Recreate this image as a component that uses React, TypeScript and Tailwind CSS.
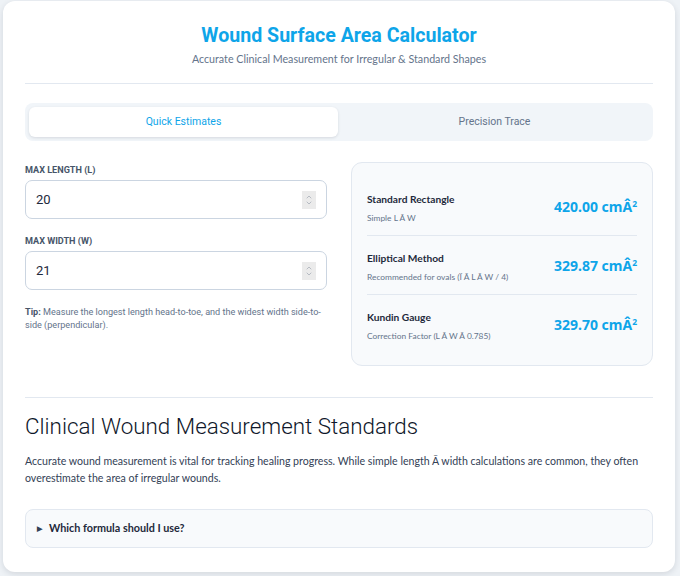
import { ChevronDown, ChevronUp } from 'lucide-react';

const results = [
  { title: 'Standard Rectangle', note: 'Simple L Ã W', value: '420.00' },
  { title: 'Elliptical Method', note: 'Recommended for ovals (Ï Ã L Ã W / 4)', value: '329.87' },
  { title: 'Kundin Gauge', note: 'Correction Factor (L Ã W Ã 0.785)', value: '329.70' },
];

function NumberField({ label, value }: { label: string; value: string }) {
  return (
    <div>
      <label className="mb-[4px] block text-[9.1px] font-bold uppercase leading-[12px] text-[#475569]">{label}</label>
      <div className="flex h-[39px] items-center rounded-[7px] border border-[#cbd5e1] bg-white pl-[10px] pr-[10px]">
        <input
          type="text"
          readOnly
          value={value}
          className="min-w-0 flex-1 bg-transparent text-[13px] text-[#1e293b] outline-none"
        />
        <span className="flex h-[18px] w-[14px] flex-col items-center justify-center bg-[#ebebeb] text-[#9ca3af]">
          <ChevronUp className="-mb-[2px] h-[8px] w-[8px]" strokeWidth={2} />
          <ChevronDown className="h-[8px] w-[8px]" strokeWidth={2} />
        </span>
      </div>
    </div>
  );
}

export default function App() {
  return (
    <div className="min-h-screen bg-[#eef2f6] pl-[3px] pr-[5px] pt-[1px] pb-[5px] font-['Roboto',sans-serif]">
      <div className="rounded-[12px] bg-white px-[22px] pt-[22px] pb-[24px] shadow-[0_2px_6px_rgba(15,23,42,0.12)]">
        <header className="pb-[16px] text-center">
          <h1 className="text-[19.6px] font-bold leading-[26px] text-[#0ea5e9]">Wound Surface Area Calculator</h1>
          <p className="mt-[2px] font-['Lato',sans-serif] text-[10.7px] leading-[16px] text-[#64748b]">
            Accurate Clinical Measurement for Irregular &amp; Standard Shapes
          </p>
        </header>
        <div className="border-t border-[#e2e8f0]" />

        <div className="mt-[19px] grid grid-cols-2 gap-[2px] rounded-[8px] bg-[#f1f5f9] p-[4px] text-[10.5px]">
          <button className="h-[30px] rounded-[6px] bg-white text-[#0ea5e9] shadow-[0_1px_3px_rgba(15,23,42,0.12)]">
            Quick Estimates
          </button>
          <button className="h-[30px] rounded-[6px] text-[#64748b]">Precision Trace</button>
        </div>

        <div className="mt-[21px] grid grid-cols-2 gap-[24px]">
          <div className="flex flex-col gap-[16px] pt-[2px]">
            <NumberField label="Max Length (L)" value="20" />
            <NumberField label="Max Width (W)" value="21" />
            <p className="text-[9.1px] leading-[13px] text-[#64748b]">
              <b className="font-bold text-[#475569]">Tip:</b> Measure the longest length head-to-toe, and the widest width
              side-to-side (perpendicular).
            </p>
          </div>

          <div className="self-start rounded-[11px] border border-[#e2e8f0] bg-[#f8fafc] px-[15px] pt-[14px] pb-[12px] font-['Lato',sans-serif]">
            {results.map((r, i) => (
              <div
                key={r.title}
                className={`flex items-center justify-between pt-[14px] pb-[11px] ${i < results.length - 1 ? 'border-b border-[#e2e8f0]' : ''}`}
              >
                <div>
                  <p className="text-[10.2px] font-bold leading-[16px] text-[#1e293b]">{r.title}</p>
                  <p className="mt-[5px] text-[8.4px] leading-[12px] text-[#64748b]">{r.note}</p>
                </div>
                <p className="-mt-[3px] font-['Noto_Sans',sans-serif] text-[14px] font-bold text-[#0ea5e9]">
                  {r.value} cmÂ<sup className="text-[8.5px]">2</sup>
                </p>
              </div>
            ))}
          </div>
        </div>

        <div className="mt-[31px] border-t border-[#e2e8f0]" />

        <section className="pt-[13px]">
          <h2 className="text-[22.4px] font-light leading-[30px] text-[#0f172a]">Clinical Wound Measurement Standards</h2>
          <p className="mt-[12px] font-['Lato',sans-serif] text-[10.6px] leading-[16.5px] text-[#334155]">
            Accurate wound measurement is vital for tracking healing progress. While simple length Ã width calculations
            are common, they often overestimate the area of irregular wounds.
          </p>
          <details className="mt-[23px] rounded-[8px] border border-[#e2e8f0] bg-[#f8fafc]">
            <summary className="flex h-[37px] cursor-pointer items-center gap-[7px] px-[11px] font-['Lato',sans-serif] text-[10.8px] font-bold text-[#1e293b] [list-style:none]">
              <span className="text-[7px] text-[#334155]">▶</span>
              Which formula should I use?
            </summary>
          </details>
        </section>
      </div>
    </div>
  );
}
